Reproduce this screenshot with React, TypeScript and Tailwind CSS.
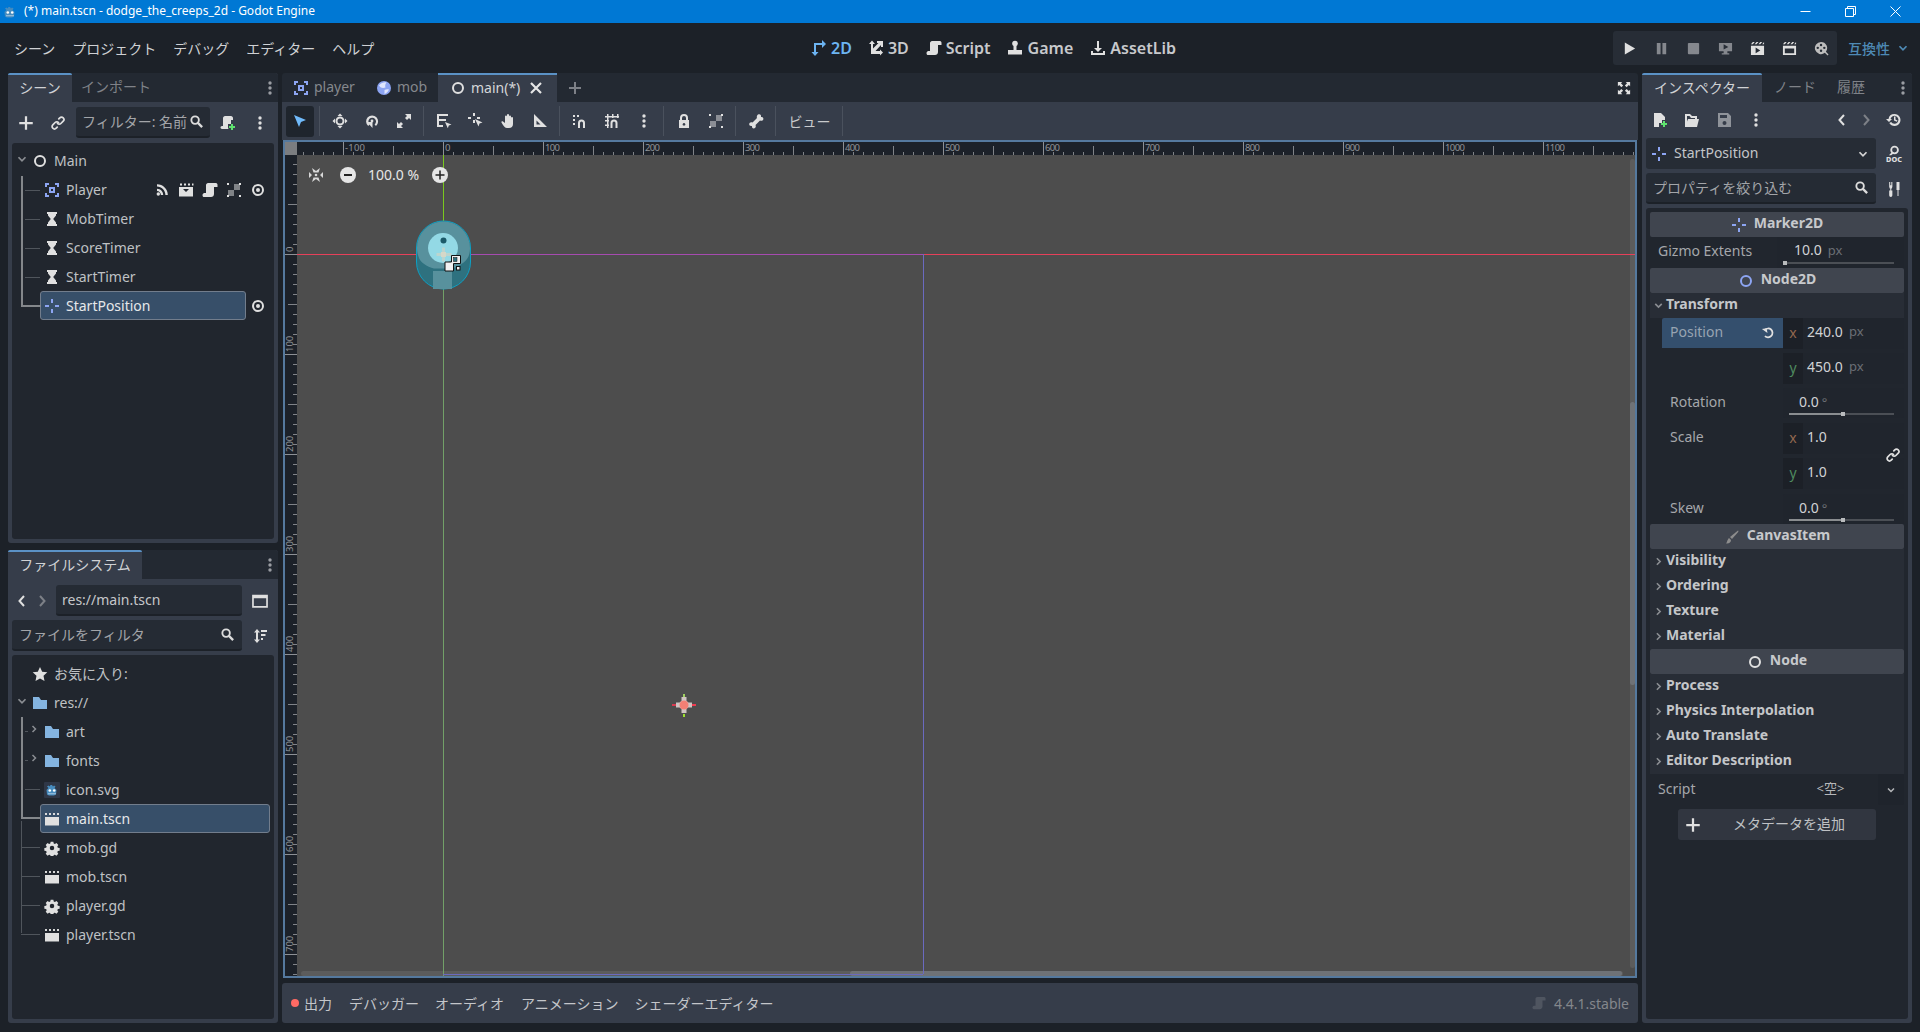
import React from "react";

const FONT = '"Noto Sans", "Noto Sans CJK JP", sans-serif';
const BLUE = "#8da5f3";
const W = "#e0e0e0";

type IP = { s?: number; c?: string; className?: string };
const Svg = ({ s = 16, c = W, className, children }: IP & { children: React.ReactNode }) => (
  <svg width={s} height={s} viewBox="0 0 16 16" fill={c} stroke="none" className={className} style={{ color: c, flex: "none" }}>
    {children}
  </svg>
);
const Ring = ({ s, c = W }: IP) => (
  <Svg s={s} c={c}><circle cx="8" cy="8" r="5" fill="none" stroke={c} strokeWidth="2" /></Svg>
);
const Marker = ({ s, c = BLUE }: IP) => (
  <Svg s={s} c={c}><path d="M7 1h2v4H7zM7 11h2v4H7zM1 7h4v2H1zM11 7h4v2h-4z" /></Svg>
);
const Area = ({ s, c = BLUE }: IP) => (
  <Svg s={s} c={c}><path d="M1 1h4v2H3v2H1zM11 1h4v4h-2V3h-2zM1 11h2v2h2v2H1zM13 11h2v4h-4v-2h2z" /><path fillRule="evenodd" d="M5 5h6v6H5zm2 2v2h2V7z" /></Svg>
);
const Timer = ({ s, c = W }: IP) => (
  <Svg s={s} c={c}><path d="M3 1h10v2h-1v1.500L9.200 8 12 11.500V13h1v2H3v-2h1v-1.500L6.800 8 4 4.500V3H3z" /></Svg>
);
const Signal = ({ s, c = W }: IP) => (
  <Svg s={s} c={c}><path d="M3 2.200c6 0 10.800 4.800 10.800 10.800h-2.400C11.400 8.400 7.600 4.600 3 4.600z" /><path d="M3 6.800c3.400 0 6.200 2.800 6.200 6.200H6.900C6.900 10.900 5.100 9.100 3 9.100z" /><circle cx="4.300" cy="12" r="1.700" /></Svg>
);
const Clap = ({ s, c = W }: IP) => (
  <Svg s={s} c={c}><path d="M1 2h2v2H1zM5 2h2v2H5zM9 2h2v2H9zM13 2h2v2h-2z" opacity=".95" /><path d="M1 6h14v8.500H1z" /></Svg>
);
const ClapGroup = ({ s, c = W }: IP) => (
  <Svg s={s} c={c}><path d="M2 1.500h2v2H2zM6 1.500h2v2H6zM10 1.500h2v2h-2zM14 1.500h1.500v2H14z" /><path fillRule="evenodd" d="M1 5h14v9.500H1zM5 7l3 3 3-3z" /></Svg>
);
const Scroll = ({ s, c = W }: IP) => (
  <Svg s={s} c={c}><path d="M6 1h8c1 0 1.500 1 1.500 2v2H12v7c0 1.700-1.300 3-3 3H2c-1 0-1.500-1-1.500-1.800 0-1 .5-1.700 1.500-2.200h2V3c0-1 1-2 2-2z" /></Svg>
);
const ScrollPlus = ({ s = 16 }: IP) => (
  <Svg s={s} c={W}><path d="M5 1h6c1 0 2 1 2 2v2h-2v4H8v3c0 .8.200 1.500.5 2H2c-1 0-1.500-.8-1.500-1.500S1 11 2 11h1V3c0-1 1-2 2-2z" /><path d="M11 9h2v2h2v2h-2v2h-2v-2H9v-2h2z" fill="#5fe36f" /></Svg>
);
const Checker = ({ s, c = W }: IP) => (
  <Svg s={s} c={c}><path d="M1 1h2v2H1zM13 1h2v2h-2zM1 13h2v2H1zM13 13h2v2h-2z" /><path d="M8 2h6v6H8zM2 8h6v6H2z" opacity=".5" /></Svg>
);
const Eye = ({ s, c = W }: IP) => (
  <Svg s={s} c={c}><path fillRule="evenodd" d="M8 2a6 6 0 1 1 0 12A6 6 0 0 1 8 2zm0 2a4 4 0 1 0 0 8 4 4 0 0 0 0-8z" /><circle cx="8" cy="8" r="2" /></Svg>
);
const Dots = ({ s, c = W, o = 1 }: IP & { o?: number }) => (
  <Svg s={s} c={c}><g opacity={o}><circle cx="8" cy="3" r="1.700" /><circle cx="8" cy="8" r="1.700" /><circle cx="8" cy="13" r="1.700" /></g></Svg>
);
const Chevron = ({ s, c = "#8a8d92", dir = "down", w = 2 }: IP & { dir?: "down" | "right" | "left" | "bigright"; w?: number }) => {
  const d = dir === "down" ? "M4 6l4 4 4-4" : dir === "right" ? "M6 4l4 4-4 4" : dir === "bigright" ? "M6 3l4.500 5L6 13" : "M10 3L5.500 8l4.500 5";
  return <Svg s={s} c={c}><path d={d} fill="none" stroke={c} strokeWidth={w} /></Svg>;
};
const Plus = ({ s, c = W }: IP) => (
  <Svg s={s} c={c}><path d="M7 2h2v5h5v2H9v5H7V9H2V7h5z" /></Svg>
);
const Link = ({ s, c = W }: IP) => (
  <Svg s={s} c={c}><g fill="none" stroke={c} strokeWidth="1.700" strokeLinecap="round"><path d="M7.500 8.500a2.400 2.400 0 0 0 3.400 0l2.300-2.300a2.400 2.400 0 0 0-3.400-3.400L8.800 3.800" /><path d="M8.500 7.500a2.400 2.400 0 0 0-3.400 0L2.800 9.800a2.400 2.400 0 0 0 3.400 3.400l1-1" /></g></Svg>
);
const Search = ({ s, c = W }: IP) => (
  <Svg s={s} c={c}><g fill="none" stroke={c}><circle cx="6.500" cy="6.500" r="4" strokeWidth="2" /><path d="M9.500 9.500L14 14" strokeWidth="2.400" /></g></Svg>
);
const Folder = ({ s, c = "#84b4e0" }: IP) => (
  <Svg s={s} c={c}><path d="M1 2h6l2 3h6v9H1z" /></Svg>
);
const Star = ({ s, c = W }: IP) => (
  <Svg s={s} c={c}><path d="M8 1l2.200 4.700 5.100.6-3.800 3.500 1 5.200L8 12.400 3.500 15l1-5.200L.7 6.300l5.100-.6z" /></Svg>
);
const Gear = ({ s, c = W }: IP) => (
  <Svg s={s} c={c}><path fillRule="evenodd" d="M6.500 1h3l.4 2 1.300.6 1.800-1.100 2 2.100-1.100 1.700.6 1.300 2 .4v3l-2 .4-.6 1.300 1.100 1.800-2.100 2-1.700-1.100-1.300.5-.4 2h-3l-.4-2-1.300-.5-1.700 1.100-2.100-2 1.100-1.800-.6-1.300-2-.4v-3l2-.4.6-1.300-1.100-1.700 2.100-2.100 1.700 1.100 1.300-.6zM8 5.500a2.500 2.500 0 1 0 0 5 2.500 2.500 0 0 0 0-5z" transform="translate(0.800 0.800) scale(.9)" /></Svg>
);
const Godot = ({ s = 16, bg }: IP & { bg?: string }) => (
  <svg width={s} height={s} viewBox="0 0 16 16" style={{ flex: "none" }}>
    {bg && <rect width="16" height="16" rx="1" fill={bg} />}
    <path d="M3 4.500l1.500-1 1 1 1-1.500 1.500 0 1 1.500 1-1 1.500 1-1 1.500 2 2-.5 4.500-2 1H5l-2-1-.5-4.500 2-2z" fill="#478cbf" />
    <circle cx="5.800" cy="8.500" r="1.300" fill="#fff" /><circle cx="10.200" cy="8.500" r="1.300" fill="#fff" />
    <path d="M4.500 11.200h1v1h-1zM6.500 11.200h1v1h-1zM8.500 11.200h1v1h-1zM10.500 11.200h1v1h-1z" fill="#fff" />
  </svg>
);
const Rigid = ({ s }: IP) => (
  <Svg s={s} c={BLUE}><circle cx="8" cy="8" r="7" /><path d="M3 5.500C5 3 8 2 10.500 2.400 9 4 9 6 9.500 7.500 7 8.500 4.500 8 3 5.500zM8.500 14c2-.8 3.500-2.500 4.500-4.500-1.500-.5-3-.5-4.500.5z" fill="#dfe6ff" /></Svg>
);
const Expand = ({ s, c = W }: IP) => (
  <Svg s={s} c={c}><path d="M1 1h5L4.500 2.500 7 5 5 7 2.500 4.500 1 6zM15 1v5l-1.500-1.500L11 7 9 5l2.500-2.500L10 1zM1 15v-5l1.500 1.500L5 9l2 2-2.500 2.500L6 15zM15 15h-5l1.500-1.500L9 11l2-2 2.500 2.500L15 10z" /></Svg>
);
const Cursor = ({ s, c = W }: IP) => (
  <Svg s={s} c={c}><path d="M2 2l12 5-5 2-2 5z" /></Svg>
);
const MoveI = ({ s, c = W }: IP) => (
  <Svg s={s} c={c}><path d="M8 .5L10.500 3h-5zM8 15.500L5.500 13h5zM.5 8L3 5.500v5zM15.500 8L13 10.500v-5z" /><circle cx="8" cy="8" r="3.500" fill="none" stroke={c} strokeWidth="2" /></Svg>
);
const RotateI = ({ s, c = W }: IP) => (
  <Svg s={s} c={c}><path d="M4.200 13A6 6 0 1 1 12 13l-1.400-1.600A3.800 3.800 0 1 0 5.700 11.300z" /><path d="M3 9h5.500v6z" /><circle cx="8" cy="8" r="1.400" /></Svg>
);
const ScaleI = ({ s, c = W }: IP) => (
  <Svg s={s} c={c}><path d="M9 1h6v6l-2-2-2 2-2-2 2-2zM1 15V9l2 2 2-2 2 2-2 2 2 2z" /></Svg>
);
const ListSel = ({ s, c = W }: IP) => (
  <Svg s={s} c={c}><path d="M1 1h11v2H3v3h7v2H3v4h4v2H1z" /><path d="M9 9l6.500 2.500-2.700 1-1 2.700z" /></Svg>
);
const Pivot = ({ s, c = W }: IP) => (
  <Svg s={s} c={c}><path d="M5 0h2v3H5zM5 7h2v3H5zM0 4h3v2H0zM9 4h3v2H9z" /><path d="M7 6l7.500 3.500-3 1-1 3z" /></Svg>
);
const Hand = ({ s, c = W }: IP) => (
  <Svg s={s} c={c}><path d="M5 7V3.500a1 1 0 0 1 2 0V2a1 1 0 0 1 2 0v1.500a1 1 0 0 1 2 0V5a1 1 0 0 1 2 0v6c0 2.500-1.500 4-4 4H7c-2 0-3-1.500-4-3L1.500 9.500c-.5-1 .8-1.800 1.500-1l2 1.500z" /></Svg>
);
const RulerI = ({ s, c = W }: IP) => (
  <Svg s={s} c={c}><path fillRule="evenodd" d="M2 1l13 13H2zm2.500 6.500V11.500H8.500z" /></Svg>
);
const Snap = ({ s, c = W }: IP) => (
  <Svg s={s} c={c}><path d="M1 2h2v2H1zM5 2h2v2H5zM1 6h2v2H1zM1 10h2v2H1z" /><path d="M6 15V10a3.500 3.500 0 0 1 7 0v5h-2v-5a1.500 1.500 0 0 0-3 0v5z" /></Svg>
);
const GridSnap = ({ s, c = W }: IP) => (
  <Svg s={s} c={c}><path d="M3 1h1.500v14H3zM8 1h1.500v4H8zM13 1h1.500v4H13zM1 3h14v1.500H1zM1 7h4v1.500H1zM1 11.500h4V13H1z" /><path d="M6.500 15v-5a3.500 3.500 0 0 1 7 0v5h-2v-5a1.500 1.500 0 0 0-3 0v5z" /></Svg>
);
const Lock = ({ s, c = W }: IP) => (
  <Svg s={s} c={c}><path fillRule="evenodd" d="M4 7V5a4 4 0 0 1 8 0v2h1v8H3V7zm2 0h4V5a2 2 0 0 0-4 0zm2 3a1.500 1.500 0 0 0-1 2.500h2A1.500 1.500 0 0 0 8 10z" /></Svg>
);
const Bone = ({ s, c = W }: IP) => (
  <Svg s={s} c={c}><path d="M10 1.500c2-1 3.500.5 3 2.500 2-.5 3 1.500 2 3-1 1-2 1-3 .5L7.500 12c.5 1 .5 2-.5 3-1.500 1-3.500 0-3-2-2 .5-3.500-1-2.500-3 1-1 2-1 3-.5L9 5c-.5-1-.2-2.500 1-3.500z" /></Svg>
);
const Play = ({ s, c = W }: IP) => <Svg s={s} c={c}><path d="M3 1.500l11 6.500-11 6.500z" /></Svg>;
const Pause = ({ s, c = W }: IP) => <Svg s={s} c={c}><path d="M3 2h4v12H3zM9 2h4v12H9z" /></Svg>;
const Stop = ({ s, c = W }: IP) => <Svg s={s} c={c}><rect x="2" y="2" width="12" height="12" rx="1" /></Svg>;
const Monitor = ({ s, c = W }: IP) => (
  <Svg s={s} c={c}><path fillRule="evenodd" d="M1 2h14v9h-5v2h2v1.500H4V13h2v-2H1zm5 1.500V9l5-2.700z" /></Svg>
);
const ClapPlay = ({ s, c = W }: IP) => (
  <Svg s={s} c={c}><path d="M1 3.500L3 1h2L3 3.500zM5 3.500L7 1h2L7 3.500zM9 3.500L11 1h2l-2 2.500zM13 3.500L15 1v2.500z" /><path fillRule="evenodd" d="M1 5h14v10H1zm5 2v6l5-3z" /></Svg>
);
const ClapOpen = ({ s, c = W }: IP) => (
  <Svg s={s} c={c}><path d="M1 3.500L3 1h2L3 3.500zM5 3.500L7 1h2L7 3.500zM9 3.500L11 1h2l-2 2.500zM13 3.500L15 1v2.500z" /><path fillRule="evenodd" d="M1 5h14v10H1zm2 3v5h10V8z" /></Svg>
);
const Movie = ({ s, c = W }: IP) => (
  <Svg s={s} c={c}><path fillRule="evenodd" d="M7.500 1a6.500 6.500 0 0 1 5.200 10.400l2.800 3-1 1-3-2.800A6.500 6.500 0 1 1 7.500 1zm0 2a1.300 1.300 0 1 0 0 2.600 1.300 1.300 0 0 0 0-2.600zm-3.500 3a1.300 1.300 0 1 0 0 2.600 1.300 1.300 0 0 0 0-2.600zm7 0a1.300 1.300 0 1 0 0 2.600 1.300 1.300 0 0 0 0-2.600zM7.500 9a1.300 1.300 0 1 0 0 2.600 1.300 1.300 0 0 0 0-2.600z" /></Svg>
);
const Twod = ({ s, c = W }: IP) => (
  <Svg s={s} c={c}><path d="M3 3h8V0l4 4-4 4V5H5v7h2.500L4 16 .5 12H3z" /></Svg>
);
const Threed = ({ s, c = W }: IP) => (
  <Svg s={s} c={c}><path d="M1 4l3-3.500L7 4H5v4.500L10.500 3H9V1h6v6h-2V5l-5.500 6H12V9.500l3 3-3 3V14H3V4z" /></Svg>
);
const Game = ({ s, c = W }: IP) => (
  <Svg s={s} c={c}><circle cx="8" cy="3.500" r="2.800" /><path d="M6.500 5.500h3V10H15v4.500H1V10h5.500z" /></Svg>
);
const Download = ({ s, c = W }: IP) => (
  <Svg s={s} c={c}><path d="M7 1h2v7h3l-4 4-4-4h3zM1 11h2v2h10v-2h2v4H1z" /></Svg>
);
const Doc = ({ s, c = W }: IP) => (
  <Svg s={s} c={c}><circle cx="8.500" cy="4.500" r="3" fill="none" stroke={c} strokeWidth="1.600" /><path d="M6 6.500L3.500 9h2L7.500 7.500z" /><text x="8" y="15" textAnchor="middle" fontSize="6.500" fontWeight="800" fontFamily="Noto Sans">DOC</text></Svg>
);
const Tools = ({ s, c = W }: IP) => (
  <Svg s={s} c={c}><path d="M3 1h1v3h1V1h1v4.500L5.500 7H5v2h1v4.500a1.500 1.500 0 0 1-3 0V9h1V7h-.5L3 5.500z" transform="scale(1.060)" /><path d="M11 1h3v8h-1v6h-1V9h-1z" transform="translate(-.5 0)" /></Svg>
);
const NewRes = ({ s, c = W }: IP) => (
  <Svg s={s} c={c}><path d="M2 1h7l4 4v3h-3v3H7v4H2z" /><path d="M11 9h2v2h2v2h-2v2h-2v-2H9v-2h2z" fill="#5fe36f" /></Svg>
);
const Open = ({ s, c = W }: IP) => (
  <Svg s={s} c={c}><path fillRule="evenodd" d="M1 2h5l2 2h5v3h2l-2 8H1zm2 2v5.500L4 7h7V6H7L5.500 4z" /></Svg>
);
const Save = ({ s, c = W }: IP) => (
  <Svg s={s} c={c}><path fillRule="evenodd" d="M2 1h10l3 3v11H2zm2 2v3h7V3zm4.500 6a2 2 0 1 0 0 4 2 2 0 0 0 0-4z" /></Svg>
);
const History = ({ s, c = W }: IP) => (
  <Svg s={s} c={c}><path d="M8.500 2a6 6 0 1 1-5.200 9l1.800-1a4 4 0 1 0-.6-3H6L3 10 0 7h2.500A6 6 0 0 1 8.500 2z" /><path d="M8 4.500h1.500v3l2 1-.7 1.300L8 8.500z" /></Svg>
);
const Reload = ({ s, c = W }: IP) => (
  <Svg s={s} c={c}><path d="M4.500 11.500a5 5 0 1 0 7-7.500 5 5 0 0 0-7 .6" fill="none" stroke={c} strokeWidth="2" /><path d="M1.500 3h5.500v5.500z" transform="rotate(-10 4 6)" /></Svg>
);
const Brush = ({ s, c = "#8d8d8d" }: IP) => (
  <Svg s={s} c={c}><path d="M14 1.500c.5.300.5 1 .2 1.500L8 10 6 8z" /><path d="M5 9l2 2c0 2.500-2 4-5 3.500C3 14 3 11 5 9z" /></Svg>
);
const Panel = ({ s, c = W }: IP) => (
  <Svg s={s} c={c}><path fillRule="evenodd" d="M1 2.500h14V14H1zM2.500 5.500v7h11v-7z" /></Svg>
);
const Sort = ({ s, c = W }: IP) => (
  <Svg s={s} c={c}><path d="M5 1l3 3.500H6v7h2L5 15l-3-3.500h2v-7H2zM9 2h6v2H9zM9 6h4.500v2H9zM9 10h2v2H9z" /></Svg>
);

const Sep = () => <div className="w-px h-[30px] bg-[#4a515d] ml-[3px] mr-[4px] shrink-0" />;
const Btn = ({ children, w = "w-8" }: { children: React.ReactNode; w?: string }) => (
  <div className={`${w} h-[31px] flex items-center justify-center shrink-0`}>{children}</div>
);
const DockTabs = ({ children, right = true }: { children: React.ReactNode; right?: boolean }) => (
  <div className="h-[29px] flex items-stretch bg-[#232932] rounded-t-[3px] relative shrink-0">
    {children}
    {right && <div className="ml-auto w-[16px] flex items-center justify-center"><Dots s={16} c="#9a9da3" /></div>}
  </div>
);
const ActiveTab = ({ children, w }: { children: React.ReactNode; w: string }) => (
  <div className={`${w} bg-[#363d4a] border-t-2 border-[#5b92c6] flex items-center justify-center text-[14px] text-[#d0d2d5] rounded-t-[2px] pb-[2px]`}>{children}</div>
);
const Input = ({ children, className = "" }: { children: React.ReactNode; className?: string }) => (
  <div className={`bg-[#252b34] border-b-2 border-[#1c2128] rounded-[3px] h-[31px] flex items-center text-[14px] ${className}`}>{children}</div>
);
const Row = ({ icon, label, selected, indent = 36, chev, right }: { icon: React.ReactNode; label: string; selected?: boolean; indent?: number; chev?: React.ReactNode; right?: React.ReactNode }) => (
  <div className="h-[29px] flex items-center relative" style={{ paddingLeft: indent }}>
    {chev && <div className="absolute top-[6px]" style={{ left: indent - 22 }}>{chev}</div>}
    <div className={`flex items-center h-[29px] flex-1 pl-[3px] gap-[6px] rounded-[3px] border ${selected ? "bg-[#374f69] border-[#727d8c] text-[#e6e8ea]" : "border-transparent text-[#bfc1c4]"}`}>
      {icon}
      <span className="text-[14px] leading-[20px]">{label}</span>
    </div>
    {right}
  </div>
);

const TreeLine = ({ className }: { className: string }) => <div className={`absolute bg-[#50555c] ${className}`} />;

function SceneDock() {
  return (
    <div className="h-[470px] flex flex-col bg-[#363d4a] rounded-[3px] shrink-0">
      <DockTabs>
        <ActiveTab w="w-[64px]">シーン</ActiveTab>
        <div className="w-[88px] flex items-center justify-center text-[14px] text-[#7f8288] pb-[2px]">インポート</div>
      </DockTabs>
      <div className="h-[41px] flex items-center pl-[2px] shrink-0">
        <Btn><Plus s={18} /></Btn>
        <div className="w-[6px]" />
        <Btn w="w-[20px]"><Link s={16} /></Btn>
        <div className="w-[8px]" />
        <Input className="w-[134px] px-[6px] text-[#a3a5a9] overflow-hidden whitespace-nowrap relative">
          <span>フィルター: 名前</span>
          <span className="absolute right-[6px]"><Search s={15} c="#dcdcdc" /></span>
        </Input>
        <div className="w-[4px]" />
        <Btn w="w-[28px]"><ScrollPlus s={16} /></Btn>
        <Btn w="w-[36px]"><Dots s={16} /></Btn>
      </div>
      <div className="flex-1 mx-[4px] mb-[4px] bg-[#21262e] rounded-[3px] pt-[3px] relative">
        <TreeLine className="left-[9px] top-[33px] w-[2px] h-[130px] bg-[#84878b]" />
        <TreeLine className="left-[13px] top-[47px] w-[15px] h-px" />
        <TreeLine className="left-[13px] top-[76px] w-[15px] h-px" />
        <TreeLine className="left-[13px] top-[105px] w-[15px] h-px" />
        <TreeLine className="left-[13px] top-[134px] w-[15px] h-px" />
        <TreeLine className="left-[9px] top-[162px] w-[20px] h-[2px] bg-[#84878b]" />
        <Row indent={0} icon={<span className="ml-[16px] flex"><Ring s={16} /></span>} label="Main" chev={<span className="ml-[25px] block"><Chevron s={14} /></span>} />
        <Row indent={28} icon={<Area s={16} />} label="Player" right={
          <div className="absolute right-[8px] top-0 h-[29px] flex items-center gap-[8px]">
            <Signal s={16} /><ClapGroup s={16} /><Scroll s={16} /><Checker s={16} /><Eye s={16} />
          </div>} />
        <Row indent={28} icon={<Timer s={16} />} label="MobTimer" />
        <Row indent={28} icon={<Timer s={16} />} label="ScoreTimer" />
        <Row indent={28} icon={<Timer s={16} />} label="StartTimer" />
        <div className="flex items-center h-[29px] pl-[28px] pr-[8px]">
          <div className="flex-1 h-[29px] flex items-center pl-[3px] gap-[6px] bg-[#374f69] border border-[#727d8c] rounded-[3px] text-[#e6e8ea] text-[14px]">
            <Marker s={16} /><span>StartPosition</span>
          </div>
          <span className="ml-[4px] flex"><Eye s={16} /></span>
        </div>
      </div>
    </div>
  );
}

function FileDock() {
  return (
    <div className="flex-1 flex flex-col bg-[#363d4a] rounded-[3px]">
      <DockTabs>
        <ActiveTab w="w-[134px]">ファイルシステム</ActiveTab>
      </DockTabs>
      <div className="h-[31px] mt-[6px] flex items-center pl-[4px] shrink-0">
        <Btn w="w-[20px]"><Chevron s={16} c={W} dir="left" /></Btn>
        <Btn w="w-[20px]"><Chevron s={16} c="#7d8087" dir="bigright" /></Btn>
        <div className="w-[4px]" />
        <Input className="w-[186px] px-[6px] text-[#c5c7ca]"><span>res://main.tscn</span></Input>
        <div className="w-[36px] flex justify-center"><Panel s={18} /></div>
      </div>
      <div className="h-[31px] mt-[4px] flex items-center pl-[4px] shrink-0">
        <Input className="w-[230px] px-[7px] text-[#a3a5a9] justify-between">
          <span>ファイルをフィルタ</span><Search s={15} c="#dcdcdc" />
        </Input>
        <div className="w-[36px] flex justify-center"><Sort s={16} /></div>
      </div>
      <div className="flex-1 mx-[4px] mt-[4px] mb-[4px] bg-[#21262e] rounded-[3px] pt-[4px] relative">
        <TreeLine className="left-[9px] top-[62px] w-[2px] h-[100px] bg-[#84878b]" />
        <TreeLine className="left-[13px] top-[76px] w-[3px] h-px" />
        <TreeLine className="left-[13px] top-[105px] w-[3px] h-px" />
        <TreeLine className="left-[13px] top-[134px] w-[15px] h-px" />
        <TreeLine className="left-[9px] top-[162px] w-[20px] h-[2px] bg-[#84878b]" />
        <TreeLine className="left-[9px] top-[166px] w-px h-[112px]" />
        <TreeLine className="left-[9px] top-[192px] w-[19px] h-px" />
        <TreeLine className="left-[9px] top-[221px] w-[19px] h-px" />
        <TreeLine className="left-[9px] top-[250px] w-[19px] h-px" />
        <TreeLine className="left-[9px] top-[279px] w-[19px] h-px" />
        <Row indent={16} icon={<Star s={16} />} label="お気に入り:" />
        <Row indent={16} icon={<Folder s={16} />} label="res://" chev={<span className="ml-[9px] block"><Chevron s={14} /></span>} />
        <Row indent={28} icon={<Folder s={16} />} label="art" chev={<span className="block ml-[10px]"><Chevron s={12} dir="right" /></span>} />
        <Row indent={28} icon={<Folder s={16} />} label="fonts" chev={<span className="block ml-[10px]"><Chevron s={12} dir="right" /></span>} />
        <Row indent={28} icon={<Godot s={16} bg="#2f3747" />} label="icon.svg" />
        <div className="pr-[4px]"><Row indent={28} selected icon={<Clap s={16} />} label="main.tscn" /></div>
        <Row indent={28} icon={<Gear s={16} />} label="mob.gd" />
        <Row indent={28} icon={<Clap s={16} />} label="mob.tscn" />
        <Row indent={28} icon={<Gear s={16} />} label="player.gd" />
        <Row indent={28} icon={<Clap s={16} />} label="player.tscn" />
      </div>
    </div>
  );
}

const majorX = Array.from({ length: 13 }, (_, i) => -100 + i * 100);
const RULER_LEFT = 297;
const ticksX: number[] = [];
for (let v = -140; v <= 1190; v += 10) ticksX.push(v);
const ticksY: number[] = [];
for (let v = -90; v <= 720; v += 10) ticksY.push(v);

function Viewport() {
  const ox = 443, oy = 254;
  return (
    <div className="relative flex-1 mx-px border-2 border-[#55799e] overflow-hidden bg-[#4d4d4d]">
      <svg className="absolute left-[-285px] top-[-142px]" width="1920" height="1032" viewBox="0 0 1920 1032">
        {/* scrollbars */}
        <rect x="301" y="971" width="1322" height="5" rx="2.500" fill="#5c5c5c" />
        <rect x="850" y="971" width="772" height="5" rx="2.500" fill="#6f7276" />
        <rect x="1630" y="159" width="5" height="809" rx="2.500" fill="#5c5c5c" />
        <rect x="1630" y="402" width="5" height="283" rx="2.500" fill="#6f7276" />
        {/* rulers */}
        <rect x="283" y="140" width="14" height="840" fill="#1c2129" />
        <rect x="283" y="140" width="1360" height="15" fill="#1c2129" />
        <rect x="283" y="140" width="14" height="15" fill="#7b7d80" />
        {ticksX.map((v) => {
          const x = ox + v;
          if (x < RULER_LEFT) return null;
          const big = v % 100 === 0, mid = v % 50 === 0;
          return <rect key={v} x={x} y={big ? 141 : mid ? 146 : 152} width="1" height={big ? 14 : mid ? 9 : 3} fill={big ? "#8d9095" : "#808388"} />;
        })}
        {majorX.map((v) => (
          <text key={v} x={ox + v + 2} y="151" fontSize="9.500" fill="#909398" fontFamily="Noto Sans" textLength={String(v).length * 5}>{v}</text>
        ))}
        {ticksY.map((v) => {
          const y = oy + v;
          if (y < 155) return null;
          const big = v % 100 === 0, mid = v % 50 === 0;
          return <rect key={v} x={big ? 283 : mid ? 288 : 293} y={y} width={big ? 14 : mid ? 9 : 4} height="1" fill={big ? "#8d9095" : "#808388"} />;
        })}
        {[0, 100, 200, 300, 400, 500, 600, 700].map((v) => (
          <text key={v} transform={`translate(293 ${oy + v - 2}) rotate(-90)`} fontSize="9.500" fill="#909398" fontFamily="Noto Sans">{v}</text>
        ))}
        {/* guides */}
        <rect x="297" y={oy} width={ox - 297} height="1" fill="#e6405a" />
        <rect x={ox} y={oy} width="480" height="1" fill="#a64bb0" />
        <rect x={ox + 480} y={oy} width="720" height="1" fill="#e6405a" />
        <rect x={ox} y="155" width="1" height={oy - 155} fill="#79c81e" />
        <rect x={ox} y={oy} width="1" height="722" fill="#72a068" />
        <rect x={ox + 480} y={oy} width="1" height="720" fill="#6a6ac0" />
        <rect x={ox} y="974" width="480" height="1" fill="#6a6ac0" />
        {/* player */}
        <rect x="416.500" y="221" width="54" height="68" rx="27" fill="#2e717f" stroke="#0da0c4" strokeWidth="1" />
        <path d="M417 248a26.500 26.500 0 0 1 53 0c0 3-.5 6-1.500 8.500-3 6-10 10-16.500 12H434c-7-2-14-6-15.500-12-1-2.500-1.500-5.500-1.500-8.500z" fill="#58919d" />
        <rect x="433" y="271" width="19" height="18" fill="#58919d" />
        <circle cx="443" cy="248" r="15" fill="#93d9e5" />
        <circle cx="443.500" cy="240.500" r="3" fill="#1b5a69" />
        <path d="M443.500 247.500v14M436.500 254.500h15" stroke="#c9d4c8" strokeWidth="3" opacity=".75" />
        <rect x="441" y="252" width="5" height="5" fill="#d8d8c8" opacity=".9" />
        <path d="M451.500 255.500h9v8h-7v7.500h-8.500v-9h6.500z" fill="#f1f1f1" stroke="#111" strokeWidth="1" />
        <rect x="453.500" y="257.500" width="3.500" height="4" fill="#2e717f" stroke="#111" strokeWidth=".5" />
        <rect x="456.500" y="266.500" width="3.500" height="3.500" fill="#f1f1f1" stroke="#111" strokeWidth="1" />
        {/* marker */}
        <rect x="672" y="704" width="5" height="2" fill="#d63a50" />
        <rect x="691" y="704" width="5" height="2" fill="#f03a50" />
        <rect x="683" y="714" width="2" height="3" fill="#9ce030" />
        <rect x="683" y="694" width="2" height="3" fill="#a0d060" />
        <path d="M681.500 697h5v4l2 1.500h3.500v5H688l-1.500 1.500v4h-5v-4l-2-1.500H676v-5h3.500l2-1.500z" fill="#cfc4c2" />
        <circle cx="684" cy="705" r="4.500" fill="#f37f74" />
      </svg>
      {/* zoom controls */}
      <div className="absolute left-[23px] top-[22px] flex items-center text-[14px] text-[#e6e6e6]">
        <div className="w-[16px] flex justify-center"><svg width="16" height="16" viewBox="0 0 16 16" fill="#d8d8d8"><path d="M4 1l4 3 4-3-1.500 4.500h-5zM4 15l4-3 4 3-1.500-4.500h-5zM1 5l3 3-3 3zM15 5l-3 3 3 3z" /><circle cx="8" cy="8" r="1.300" /></svg></div>
        <div className="ml-[16px] w-[16px] h-[16px] rounded-full bg-[#e6e6e6] flex items-center justify-center"><div className="w-[8px] h-[2px] bg-[#222]" /></div>
        <span className="ml-[12px] w-[56px] text-[14px]">100.0 %</span>
        <div className="ml-[8px] w-[16px] h-[16px] rounded-full bg-[#e6e6e6] flex items-center justify-center"><Plus s={12} c="#222" /></div>
      </div>
    </div>
  );
}

function CenterPanel() {
  return (
    <div className="flex-1 min-w-0 flex flex-col">
      <div className="h-[29px] flex items-stretch bg-[#232932] rounded-t-[3px] shrink-0 relative text-[14px]">
        <div className="w-[78px] flex items-center pl-[11px] gap-[5px] text-[#85888d]"><Area s={16} /><span className="-mt-[2px]">player</span></div>
        <div className="w-[78px] flex items-center pl-[16px] gap-[5px] text-[#85888d]"><Rigid s={16} /><span className="-mt-[2px]">mob</span></div>
        <div className="w-[119px] bg-[#363d4a] border-t-2 border-[#5b92c6] flex items-center pl-[12px] gap-[5px] text-[#d4d6d8] pb-[2px]">
          <Ring s={16} /><span className="-mt-[1px] mr-[4px]">main(*)</span><svg width="14" height="14" viewBox="0 0 14 14" stroke="#e6e6e6" strokeWidth="2.200"><path d="M2 2l10 10M12 2L2 12" /></svg>
        </div>
        <div className="w-[36px] flex items-center justify-center"><Plus s={16} c="#7d8087" /></div>
        <div className="ml-auto w-[28px] flex items-center justify-center"><Expand s={14} /></div>
      </div>
      <div className="h-[38px] bg-[#363d4a] flex items-center pl-[4px] shrink-0">
        <div className="w-[28px] h-[31px] rounded-[3px] bg-[#1f252d] flex items-center justify-center shrink-0"><Cursor s={16} c="#70bafa" /></div>
        <div className="w-[2px]" />
        <Sep />
        <Btn><MoveI s={16} /></Btn>
        <Btn><RotateI s={16} /></Btn>
        <Btn><ScaleI s={16} /></Btn>
        <Sep />
        <Btn><ListSel s={16} /></Btn>
        <Btn><Pivot s={16} /></Btn>
        <Btn><Hand s={16} /></Btn>
        <Btn><RulerI s={16} /></Btn>
        <Sep />
        <Btn><Snap s={16} /></Btn>
        <Btn><GridSnap s={16} /></Btn>
        <Btn><Dots s={16} /></Btn>
        <Sep />
        <Btn><Lock s={16} /></Btn>
        <Btn><Checker s={16} /></Btn>
        <Sep />
        <Btn><Bone s={16} /></Btn>
        <Sep />
        <div className="w-[59px] flex items-center justify-center text-[14px] text-[#c8cacc] shrink-0">ビュー</div>
        <Sep />
      </div>
      <Viewport />
      <div className="h-[5px] shrink-0" />
      <div className="h-[40px] bg-[#363d4a] rounded-[3px] flex items-center pl-[9px] text-[14px] text-[#c4c6ca] shrink-0 relative">
        <span className="w-[8px] h-[8px] rounded-full bg-[#ff6a64] mr-[2px]" />
        <span className="ml-[3px]">出力</span>
        <span className="ml-[17px]">デバッガー</span>
        <span className="ml-[16px]">オーディオ</span>
        <span className="ml-[17px]">アニメーション</span>
        <span className="ml-[16px]">シェーダーエディター</span>
        <div className="ml-auto flex items-center gap-[8px] pr-[9px] text-[#84878c]">
          <Scroll s={14} c="#4f5560" /><span>4.4.1.stable</span>
        </div>
      </div>
    </div>
  );
}

const Section = ({ icon, label }: { icon: React.ReactNode; label: string }) => (
  <div className="h-[25px] bg-[#40454f] rounded-[2px] flex items-center justify-center gap-[7px] text-[14px] font-bold text-[#c7c9cc] shrink-0">
    {icon}<span className="-mt-[5px]">{label}</span>
  </div>
);
const Sub = ({ label, open }: { label: string; open?: boolean }) => (
  <div className="h-[25px] flex items-center pl-[2px] bg-[#282d36] text-[14px] font-bold text-[#c4c6c9] shrink-0">
    <Chevron s={13} dir={open ? "down" : "right"} /><span className="ml-px -mt-[5px]">{label}</span>
  </div>
);
const Slider = ({ label, value, unit, pos }: { label: string; value: string; unit: string; pos: number }) => (
  <div className="h-[30px] flex items-center text-[14px] shrink-0">
    <span className="w-[133px] pl-[20px] text-[#a5a7ab] -mt-[4px]">{label}</span>
    <div className="flex-1 h-[30px] bg-[#20252d] rounded-[2px] relative pl-[16px] pt-[3px]">
      <span className="text-[#d0d2d4]">{value}</span>
      <span className="text-[#6b6f75] ml-[3px] text-[13px]">{unit}</span>
      <div className="absolute left-[6px] right-[10px] bottom-[3px] h-[2px] bg-[#4b4f55]" />
      <div className="absolute left-[6px] bottom-[3px] h-[2px] bg-[#8a8d90]" style={{ width: pos }} />
      <div className="absolute bottom-[2px] w-[4px] h-[4px] bg-[#b9bbbd]" style={{ left: 6 + pos - 2 }} />
    </div>
  </div>
);
const Vec = ({ axis, value, unit }: { axis: "x" | "y"; value: string; unit?: string }) => (
  <div className="h-[31px] flex items-center bg-[#20252d] rounded-[2px] text-[14px]">
    <span className={`w-[20px] h-[31px] flex items-center justify-center bg-[#1c2027] ${axis === "x" ? "text-[#93684f]" : "text-[#4f8a5f]"}`}><span className="-mt-[2px]">{axis}</span></span>
    <span className="ml-[4px] text-[#d0d2d4] w-[36px] -mt-[4px]">{value}</span>
    {unit && <span className="text-[#6b6f75] text-[13px] ml-[6px] -mt-[3px]">{unit}</span>}
  </div>
);

function Inspector() {
  return (
    <div className="h-full flex flex-col bg-[#363d4a] rounded-[3px]">
      <DockTabs right={false}>
        <ActiveTab w="w-[120px]">インスペクター</ActiveTab>
        <div className="w-[66px] flex items-center justify-center text-[14px] text-[#7f8288] pb-[2px]">ノード</div>
        <div className="w-[46px] flex items-center justify-center text-[14px] text-[#7f8288] pb-[2px]">履歴</div>
        <div className="ml-auto w-[18px] flex items-center justify-center"><Dots s={16} c="#9a9da3" /></div>
      </DockTabs>
      <div className="h-[36px] flex items-center pl-[2px] pr-[6px] shrink-0">
        <Btn><NewRes s={16} /></Btn>
        <Btn><Open s={16} /></Btn>
        <Btn><Save s={16} c="#8f939a" /></Btn>
        <Btn><Dots s={16} /></Btn>
        <div className="flex-1" />
        <Btn w="w-[24px]"><Chevron s={16} c={W} dir="left" /></Btn>
        <Btn w="w-[24px]"><Chevron s={16} c="#7d8087" dir="bigright" /></Btn>
        <div className="w-[4px]" />
        <Btn w="w-[24px]"><History s={16} /></Btn>
      </div>
      <div className="flex items-center pl-[4px] h-[31px] shrink-0">
        <div className="w-[230px] h-[31px] bg-[#262c35] rounded-[3px] flex items-center pl-[5px] pr-[6px] text-[14px] text-[#c3c5c8]">
          <Marker s={16} /><span className="ml-[7px] -mt-[2px]">StartPosition</span>
          <span className="ml-auto"><Chevron s={14} c="#d5d5d5" /></span>
        </div>
        <div className="w-[36px] flex justify-center"><Doc s={18} /></div>
      </div>
      <div className="flex items-center pl-[4px] h-[31px] mt-[4px] shrink-0">
        <Input className="w-[230px] px-[7px] text-[#a3a5a9] justify-between">
          <span>プロパティを絞り込む</span><Search s={15} c="#dcdcdc" />
        </Input>
        <div className="w-[36px] flex justify-center"><Tools s={16} /></div>
      </div>
      <div className="flex-1 mx-[4px] mt-[4px] mb-[4px] bg-[#21262e] rounded-[3px] pt-[4px] px-[4px] flex flex-col">
        <Section icon={<Marker s={16} />} label="Marker2D" />
        <div className="h-[31px] flex items-center text-[14px] shrink-0">
          <span className="w-[127px] pl-[8px] text-[#a5a7ab] -mt-[4px]">Gizmo Extents</span>
          <div className="flex-1 h-[31px] bg-[#20252d] relative pl-[17px] pt-[2px]">
            <span className="text-[#d0d2d4]">10.0</span><span className="text-[#6b6f75] ml-[6px] text-[13px]">px</span>
            <div className="absolute left-[6px] right-[10px] bottom-[4px] h-[2px] bg-[#4b4f55]" />
            <div className="absolute left-[6px] bottom-[3px] w-[4px] h-[4px] bg-[#b9bbbd]" />
          </div>
        </div>
        <Section icon={<Ring s={16} c={BLUE} />} label="Node2D" />
        <Sub label="Transform" open />
        <div className="flex shrink-0 h-[30px]">
          <div className="w-[12px]" />
          <div className="w-[121px] bg-[#344f6d] flex items-center pl-[8px] pr-[8px] justify-between text-[14px] text-[#98a4b2] rounded-tl-[2px]">
            <span className="-mt-[3px]">Position</span><Reload s={14} />
          </div>
          <div className="flex-1"><Vec axis="x" value="240.0" unit="px" /></div>
        </div>
        <div className="flex shrink-0 mt-[5px] ml-[133px]"><div className="flex-1"><Vec axis="y" value="450.0" unit="px" /></div></div>
        <div className="h-[4px] shrink-0" />
        <Slider label="Rotation" value="0.0" unit="°" pos={54} />
        <div className="h-[5px] shrink-0" />
        <div className="flex shrink-0">
          <span className="w-[133px] pl-[20px] pt-[3px] text-[14px] text-[#a5a7ab]">Scale</span>
          <div className="flex-1 relative flex flex-col gap-[4px]">
            <Vec axis="x" value="1.0" />
            <Vec axis="y" value="1.0" />
            <div className="absolute right-[3px] top-[24px]"><Link s={16} /></div>
          </div>
        </div>
        <div className="h-[5px] shrink-0" />
        <Slider label="Skew" value="0.0" unit="°" pos={54} />
        <Section icon={<Brush s={16} />} label="CanvasItem" />
        <Sub label="Visibility" />
        <Sub label="Ordering" />
        <Sub label="Texture" />
        <Sub label="Material" />
        <Section icon={<Ring s={16} />} label="Node" />
        <Sub label="Process" />
        <Sub label="Physics Interpolation" />
        <Sub label="Auto Translate" />
        <Sub label="Editor Description" />
        <div className="h-[31px] flex items-center text-[14px] shrink-0">
          <span className="w-[133px] pl-[8px] text-[#a5a7ab] -mt-[3px]">Script</span>
          <div className="w-[95px] flex justify-center text-[#b5b7ba] -mt-[2px] text-[13px]">&lt;空&gt;</div>
          <div className="w-[26px] h-[31px] flex items-center justify-center bg-[#1f242c] rounded-[2px]"><Chevron s={12} c="#b5b7ba" /></div>
        </div>
        <div className="mt-[4px] mx-[28px] h-[31px] bg-[#313640] rounded-[3px] flex items-center text-[14px] text-[#bfc1c4] shrink-0 pl-[6px]">
          <Plus s={18} /><span className="ml-[31px] -mt-[2px]">メタデータを追加</span>
        </div>
      </div>
    </div>
  );
}

export default function App() {
  return (
    <div className="w-[1920px] h-[1032px] flex flex-col bg-[#1c2128] overflow-hidden" style={{ fontFamily: FONT }}>
      <div className="h-[23px] bg-[#0078d4] flex items-center pl-[2px] text-white text-[12px] shrink-0">
        <Godot s={16} />
        <span className="ml-[6px] -mt-[1px]">(*) main.tscn - dodge_the_creeps_2d - Godot Engine</span>
        <div className="ml-auto flex items-center pr-[2px]">
          <div className="w-[45px] flex justify-center"><svg width="11" height="11" viewBox="0 0 11 11" stroke="#fff"><path d="M0.500 5.500h10" /></svg></div>
          <div className="w-[45px] flex justify-center"><svg width="11" height="11" viewBox="0 0 11 11" fill="none" stroke="#fff"><path d="M.5 2.500h8v8h-8zM2.500 2.500V.5h8v8h-2" /></svg></div>
          <div className="w-[45px] flex justify-center"><svg width="11" height="11" viewBox="0 0 11 11" stroke="#fff"><path d="M.5.5l10 10M10.500.5l-10 10" /></svg></div>
        </div>
      </div>
      <div className="h-[50px] flex items-center text-[14px] text-[#cfd1d4] shrink-0 relative">
        <div className="flex gap-[17px] pl-[14px]">
          <span>シーン</span><span>プロジェクト</span><span>デバッグ</span><span>エディター</span><span>ヘルプ</span>
        </div>
        <div className="absolute left-[811px] top-0 h-[50px] flex items-center text-[16px] font-semibold text-[#c7c9cc]">
          <span className="flex items-center gap-[4px] text-[#6cb4f2]"><Twod s={16} c="#6cb4f2" />2D</span>
          <span className="flex items-center gap-[4px] ml-[16px]"><Threed s={16} />3D</span>
          <span className="flex items-center gap-[4px] ml-[17px]"><Scroll s={16} />Script</span>
          <span className="flex items-center gap-[5px] ml-[16px]"><Game s={16} />Game</span>
          <span className="flex items-center gap-[4px] ml-[17px]"><Download s={16} />AssetLib</span>
        </div>
        <div className="ml-auto h-[34px] w-[224px] bg-[#272d36] rounded-[3px] flex items-center">
          <Btn><Play s={15} /></Btn>
          <Btn><Pause s={15} c="#85888e" /></Btn>
          <Btn><Stop s={15} c="#85888e" /></Btn>
          <Btn><Monitor s={15} c="#85888e" /></Btn>
          <Btn><ClapPlay s={15} /></Btn>
          <Btn><ClapOpen s={15} /></Btn>
          <Btn><Movie s={15} c="#bdbdbd" /></Btn>
        </div>
        <div className="w-[83px] flex items-center pl-[11px] gap-[6px] text-[#4e8ab5] font-medium"><span>互換性</span><Chevron s={14} c="#4e8ab5" /></div>
      </div>
      <div className="flex-1 min-h-0 flex px-[8px] pb-[9px] gap-[4px]">
        <div className="w-[270px] flex flex-col gap-[7px] shrink-0">
          <SceneDock />
          <FileDock />
        </div>
        <CenterPanel />
        <div className="w-[270px] shrink-0"><Inspector /></div>
      </div>
    </div>
  );
}
